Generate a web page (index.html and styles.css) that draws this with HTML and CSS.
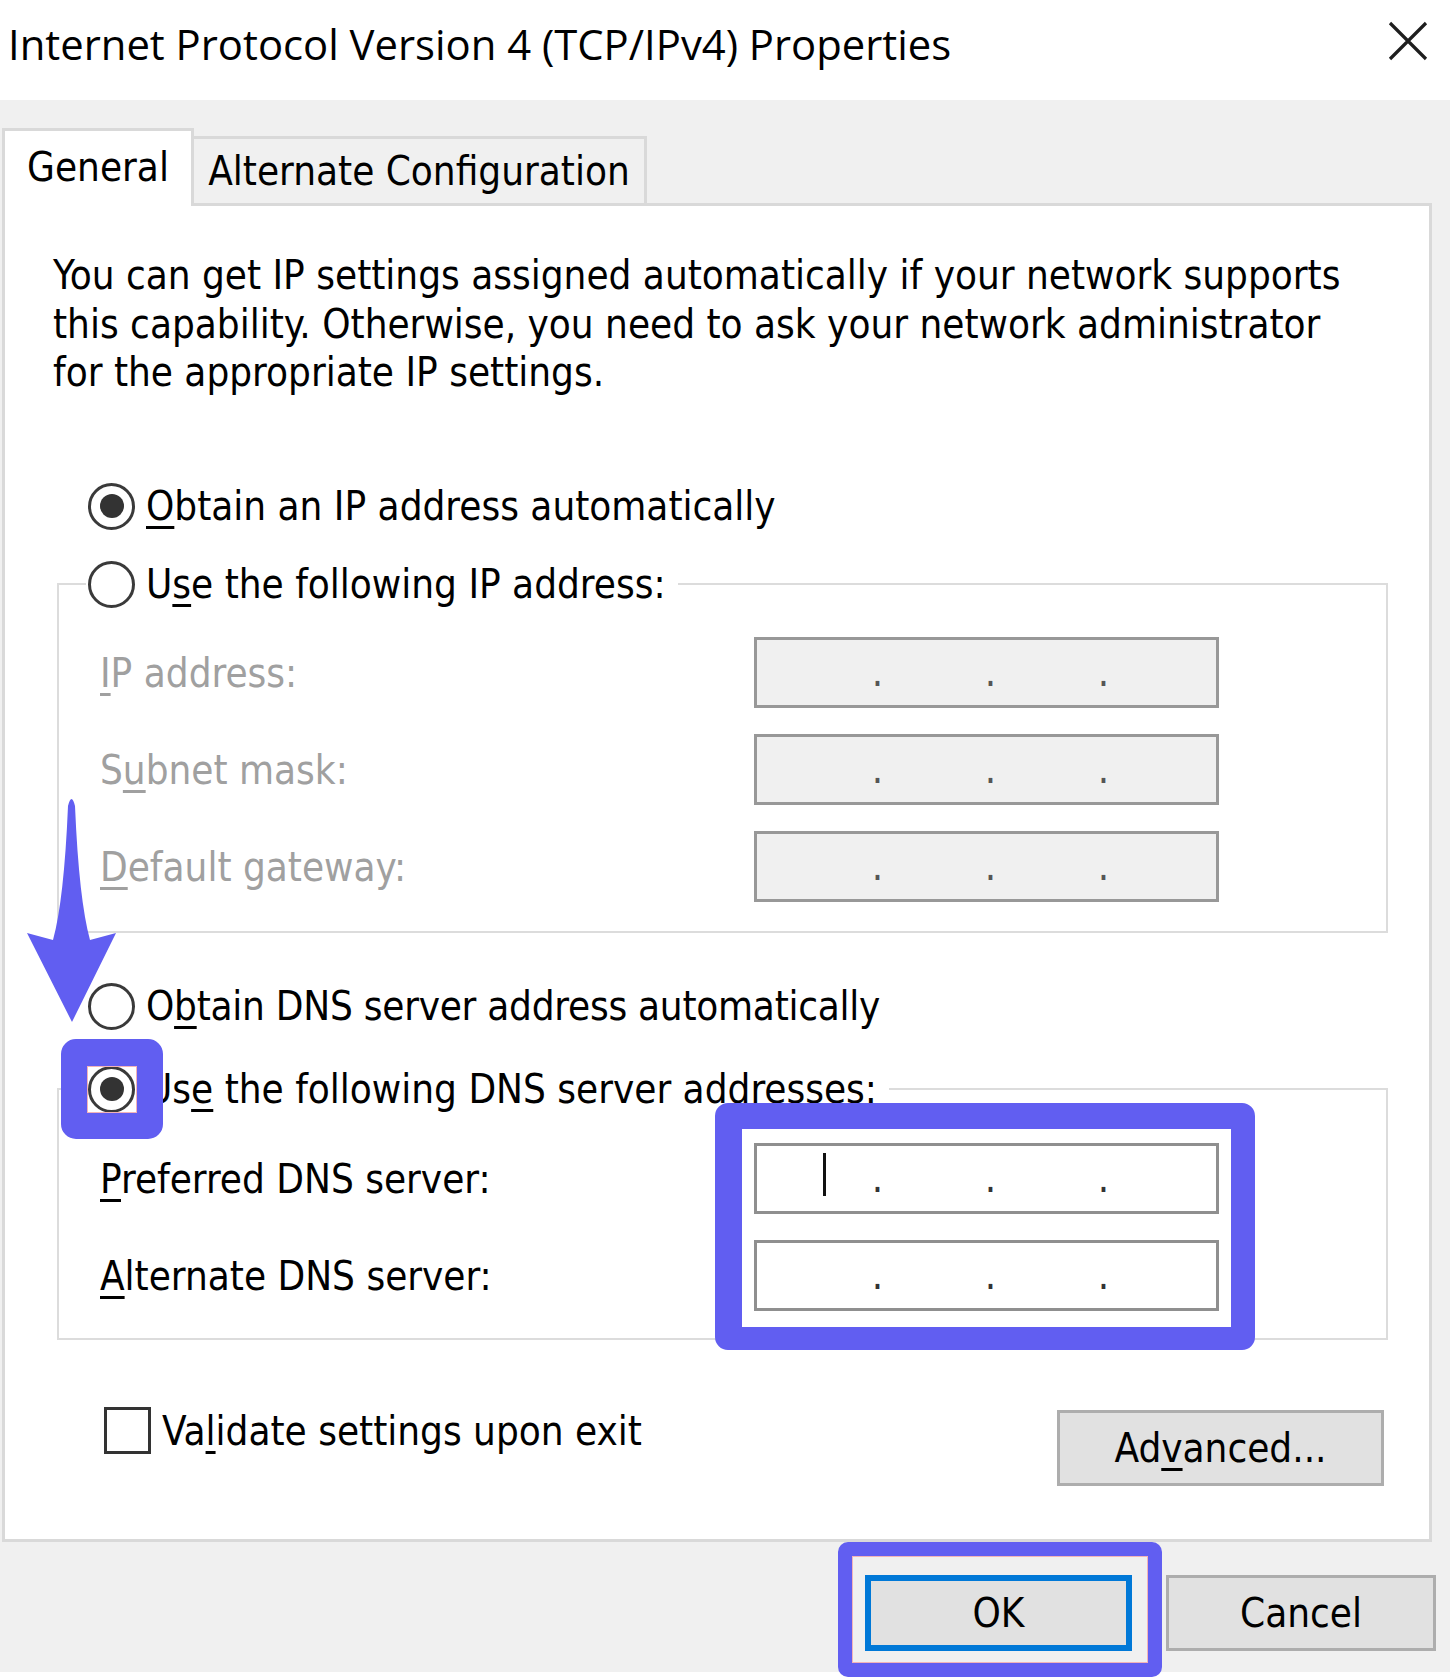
FILE: index.html
```html
<!DOCTYPE html>
<html lang="en">
<head>
<meta charset="utf-8">
<title>Internet Protocol Version 4 (TCP/IPv4) Properties</title>
<link rel="stylesheet" href="styles.css">
</head>
<body>
<div class="root">
  <div class="titlebar">
    <div class="title">Internet Protocol Version 4 (TCP/IPv4) Properties</div>
    <svg class="close" width="40" height="40" viewBox="0 0 40 40"><path d="M2 2 L38 38 M38 2 L2 38" stroke="#1e1e1e" stroke-width="3.2" fill="none"/></svg>
  </div>
  <div class="dialog">
    <div class="tabs">
      <div class="tab tab-active">General</div>
      <div class="tab tab-other">Alternate Configuration</div>
    </div>
    <div class="panel">
      <p class="intro">You can get IP settings assigned automatically if your network supports<br>this capability. Otherwise, you need to ask your network administrator<br>for the appropriate IP settings.</p>

      <div class="opt opt-first"><span class="radio checked"></span><span class="opt-label"><u>O</u>btain an IP address automatically</span></div>

      <fieldset class="group group-ip">
        <legend class="legend"><div class="opt"><span class="radio"></span><span class="opt-label">U<u>s</u>e the following IP address:</span></div></legend>
        <div class="field"><span class="field-label disabled"><u>I</u>P address:</span><div class="ipbox off"><span class="seg">.</span><span class="seg">.</span><span class="seg">.</span></div></div>
        <div class="field"><span class="field-label disabled">S<u>u</u>bnet mask:</span><div class="ipbox off"><span class="seg">.</span><span class="seg">.</span><span class="seg">.</span></div></div>
        <div class="field"><span class="field-label disabled"><u>D</u>efault gateway:</span><div class="ipbox off"><span class="seg">.</span><span class="seg">.</span><span class="seg">.</span></div></div>
      </fieldset>

      <div class="opt opt-dns"><span class="radio"></span><span class="opt-label">O<u>b</u>tain DNS server address automatically</span></div>

      <fieldset class="group group-dns">
        <legend class="legend"><div class="opt"><span class="radio checked"></span><span class="opt-label">Us<u>e</u> the following DNS server addresses:</span></div></legend>
        <div class="field"><span class="field-label"><u>P</u>referred DNS server:</span><div class="ipbox"><span class="caret"></span><span class="seg">.</span><span class="seg">.</span><span class="seg">.</span></div></div>
        <div class="field"><span class="field-label"><u>A</u>lternate DNS server:</span><div class="ipbox"><span class="seg">.</span><span class="seg">.</span><span class="seg">.</span></div></div>
      </fieldset>

      <div class="bottom-row">
        <div class="check-wrap"><span class="checkbox"></span><span class="check-label">Va<u>l</u>idate settings upon exit</span></div>
        <div class="btn btn-adv">Ad<u>v</u>anced...</div>
      </div>
    </div>
    <div class="actions">
      <div class="btn btn-ok">OK</div>
      <div class="btn btn-cancel">Cancel</div>
    </div>
  </div>

  <svg class="arrow" width="140" height="260" viewBox="0 0 140 260"><path d="M68 26 Q71.5 12 75 26 Q79 120 90 160 L116 153 L72 242 L27 153 L53 160 Q64 120 68 26 Z" fill="#615ef1"/></svg>
  <div class="hl hl-radio"></div>
  <div class="hl hl-dns"></div>
  <div class="hl hl-ok"></div>
</div>
</body>
</html>
```
FILE: styles.css
```css
* { box-sizing: border-box; }
html, body { margin: 0; padding: 0; background: #ffffff; }
.root {
  position: relative;
  width: 1450px;
  height: 1678px;
  background: #ffffff;
  font-family: "DejaVu Sans Condensed", "DejaVu Sans", sans-serif;
  font-stretch: condensed;
  font-size: 40px;
  color: #000;
  overflow: hidden;
}
u { text-decoration-thickness: 3px; text-underline-offset: 6px; }

.titlebar {
  height: 100px;
  display: flex;
  align-items: center;
  justify-content: space-between;
  padding: 0 22px 12px 8px;
}
.title {
  font-family: "Open Sans", "Noto Sans", sans-serif;
  font-stretch: normal;
  font-size: 41.8px;
  line-height: 1.2;
  color: #000;
}
.close { margin-bottom: 6px; }

.dialog {
  background: #f0f0f0;
  height: 1572px;
  padding-top: 28px;
}
.tabs {
  display: flex;
  align-items: flex-end;
  padding-left: 2px;
}
.tab {
  display: flex;
  align-items: center;
  justify-content: center;
  border: 3px solid #d9d9d9;
  border-bottom: 0;
}
.tab-active {
  width: 192px;
  height: 78px;
  margin-bottom: -3px;
  padding-bottom: 3px;
  background: #ffffff;
  position: relative;
  z-index: 1;
}
.tab-other {
  width: 453px;
  height: 67px;
  border-left: 0;
  background: #f0f0f0;
}
.panel {
  margin-left: 2px;
  width: 1430px;
  height: 1339px;
  border: 3px solid #d9d9d9;
  background: #ffffff;
  overflow: hidden;
}
.intro {
  margin: 45px 0 0 48px;
  line-height: 48.7px;
}

.opt {
  display: flex;
  align-items: center;
  height: 50px;
}
.opt-first { margin: 84px 0 0 83px; }
.opt-dns { margin: 48px 0 0 83px; }
.opt-label { margin-left: 11px; white-space: nowrap; }
.opt-dns .opt-label { letter-spacing: -0.25px; }
.radio {
  width: 47px;
  height: 47px;
  flex: 0 0 47px;
  border: 3px solid #3a3a3a;
  border-radius: 50%;
  background: #fff;
  display: flex;
  align-items: center;
  justify-content: center;
}
.radio.checked::after {
  content: "";
  width: 24px;
  height: 24px;
  border-radius: 50%;
  background: #333;
}

.group {
  width: 1331px;
  margin: 0 0 0 52px;
  border: 2px solid #dcdcdc;
  min-width: 0;
}
.group-ip { margin-top: 28px; padding: 28px 0 29px 41px; }
.group-dns { margin-top: 33px; padding: 29px 0 27px 41px; }
.legend {
  padding: 0 12px 0 2px;
  margin-left: -14px;
}
.field {
  display: flex;
  align-items: center;
  height: 71px;
}
.field + .field { margin-top: 26px; }
.field-label { width: 654px; flex: 0 0 654px; white-space: nowrap; }
.disabled { color: #a0a0a0; }
.ipbox {
  position: relative;
  width: 465px;
  height: 71px;
  border: 3px solid #8f8f8f;
  background: #ffffff;
  display: flex;
  padding-left: 64px;
  line-height: 65px;
  color: #333;
}
.ipbox.off { background: #f0f0f0; border-color: #989898; color: #555; }
.seg { width: 113px; text-align: center; }
.caret {
  position: absolute;
  left: 66px;
  top: 7px;
  width: 3px;
  height: 43px;
  background: #111;
}

.bottom-row {
  display: flex;
  align-items: flex-start;
  margin: 67px 45px 0 99px;
}
.check-wrap { display: flex; align-items: center; }
.checkbox {
  width: 47px;
  height: 47px;
  border: 3px solid #333;
  background: #fff;
}
.check-label { margin-left: 11px; }
.btn {
  display: flex;
  align-items: center;
  justify-content: center;
  background: #e1e1e1;
  border: 3px solid #adadad;
  height: 76px;
}
.btn-adv { margin-left: auto; margin-top: 3px; width: 327px; }
.actions {
  display: flex;
  justify-content: flex-end;
  gap: 34px;
  margin-top: 33px;
  padding-right: 14px;
}
.btn-ok { width: 267px; border: 6px solid #0078d7; }
.btn-cancel { width: 270px; }

.arrow { position: absolute; left: 0; top: 780px; }
.hl {
  position: absolute;
  border-style: solid;
  border-color: #615ef1;
}
.hl::after {
  content: "";
  position: absolute;
  inset: 0;
  border: 1px solid #f2b3b8;
}
.hl-radio {
  left: 61px; top: 1039px; width: 102px; height: 100px;
  border-width: 27px 26px 26px 26px;
  border-radius: 15px;
}
.hl-dns {
  left: 715px; top: 1103px; width: 540px; height: 247px;
  border-width: 26px 24px 23px 27px;
  border-radius: 13px;
}
.hl-dns::after { display: none; }
.hl-ok {
  left: 838px; top: 1542px; width: 324px; height: 135px;
  border-width: 14px;
  border-radius: 10px;
}
```
